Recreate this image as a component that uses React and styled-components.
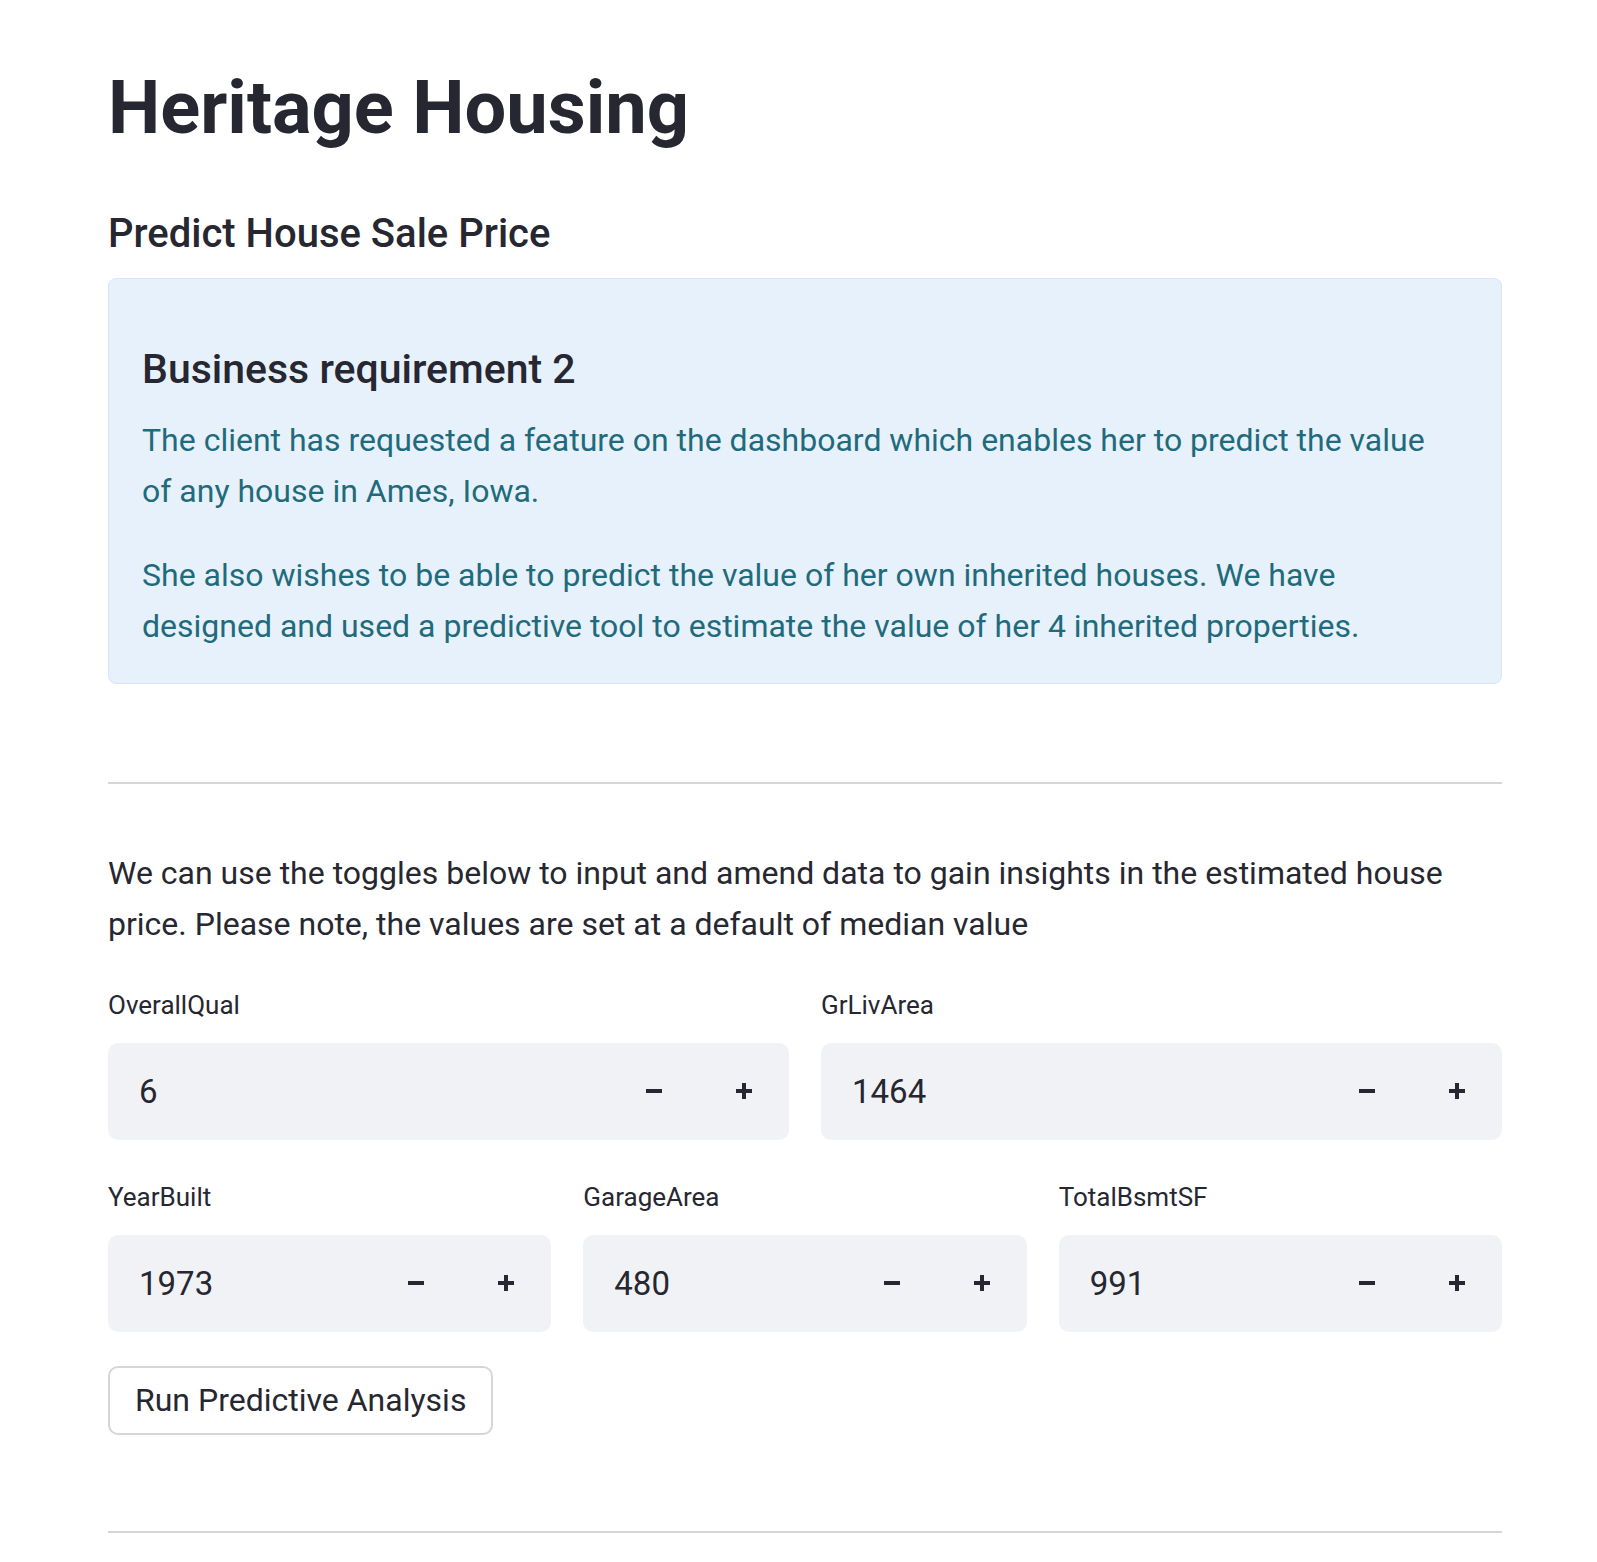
import React from 'react'
import styled, { createGlobalStyle } from 'styled-components'

const COLORS = {
  TEXT: '#262730',
  INFO_TEXT: '#1f6b7b',
  INFO_BG: '#e7f1fb',
  INFO_BORDER: '#d4e6f8',
  INPUT_BG: '#f0f2f6',
  RULE: '#d6d6d9',
}

const GlobalStyle = createGlobalStyle`
  body {
    margin: 0;
    background: #ffffff;
    color: ${COLORS.TEXT};
    font-family: Roboto, "Noto Sans", "Liberation Sans", sans-serif;
  }
`

const Main = styled.main`
  padding: 64px 95px 40px 108px;
`
const Title = styled.h1`
  font-size: 74px;
  font-weight: 700;
  line-height: 1.2;
  margin: 0 0 57px;
`
const Subtitle = styled.h3`
  font-size: 40px;
  font-weight: 500;
  line-height: 1.2;
  margin: 0 0 20px;
`
const InfoBox = styled.div`
  background: ${COLORS.INFO_BG};
  border: 1px solid ${COLORS.INFO_BORDER};
  border-radius: 8px;
  padding: 66px 48px 31px 33px;
`
const InfoHeading = styled.h4`
  font-size: 41px;
  font-weight: 500;
  line-height: 1.2;
  margin: 0 0 21px;
`
const InfoText = styled.p`
  color: ${COLORS.INFO_TEXT};
  font-size: 32px;
  line-height: 51px;
  margin: 0 0 ${p => (p.last ? 0 : '33px')};
`
const Rule = styled.hr`
  border: none;
  border-top: 2px solid ${COLORS.RULE};
  margin: ${p => p.top}px 0 0;
`
const Lead = styled.p`
  font-size: 32px;
  line-height: 51px;
  margin: 64px 0 40px;
`
const InputGrid = styled.div`
  display: grid;
  grid-template-columns: repeat(${p => p.cols}, 1fr);
  gap: 32px;
  margin-bottom: ${p => p.gap}px;
`
const Field = styled.div`
  display: flex;
  flex-direction: column;
`
const Label = styled.label`
  font-size: 26px;
  line-height: 30px;
  margin-bottom: 23px;
`
const NumberBox = styled.div`
  display: flex;
  align-items: center;
  height: 97px;
  background: ${COLORS.INPUT_BG};
  border-radius: 10px;
`
const Value = styled.span`
  flex: 1;
  padding-left: 31px;
  font-size: 33px;
`
const StepButton = styled.button`
  width: 90px;
  height: 100%;
  display: flex;
  align-items: center;
  justify-content: center;
  border: none;
  background: transparent;
  padding: 0;
  color: ${COLORS.TEXT};
`
const RunButton = styled.button`
  align-self: flex-start;
  height: 69px;
  padding: 0 25px;
  background: #ffffff;
  border: 2px solid ${COLORS.RULE};
  border-radius: 10px;
  font-family: inherit;
  font-size: 32px;
  color: ${COLORS.TEXT};
`

const Minus = () => (
  <svg width="16" height="16" viewBox="0 0 16 16">
    <rect x="0" y="6" width="16" height="4" fill="currentColor" />
  </svg>
)

const Plus = () => (
  <svg width="16" height="16" viewBox="0 0 16 16">
    <rect x="0" y="6" width="16" height="4" fill="currentColor" />
    <rect x="6" y="0" width="4" height="16" fill="currentColor" />
  </svg>
)

const NumberInput = ({ label, value }) => (
  <Field>
    <Label>{label}</Label>
    <NumberBox>
      <Value>{value}</Value>
      <StepButton aria-label="decrement"><Minus /></StepButton>
      <StepButton aria-label="increment"><Plus /></StepButton>
    </NumberBox>
  </Field>
)

const App = () => (
  <>
    <GlobalStyle />
    <Main>
      <Title>Heritage Housing</Title>
      <Subtitle>Predict House Sale Price</Subtitle>
      <InfoBox>
        <InfoHeading>Business requirement 2</InfoHeading>
        <InfoText>
          The client has requested a feature on the dashboard which enables her to predict the value
          of any house in Ames, Iowa.
        </InfoText>
        <InfoText last>
          She also wishes to be able to predict the value of her own inherited houses. We have
          designed and used a predictive tool to estimate the value of her 4 inherited properties.
        </InfoText>
      </InfoBox>
      <Rule top={98} />
      <Lead>
        We can use the toggles below to input and amend data to gain insights in the estimated house
        price. Please note, the values are set at a default of median value
      </Lead>
      <InputGrid cols={2} gap={42}>
        <NumberInput label="OverallQual" value="6" />
        <NumberInput label="GrLivArea" value="1464" />
      </InputGrid>
      <InputGrid cols={3} gap={34}>
        <NumberInput label="YearBuilt" value="1973" />
        <NumberInput label="GarageArea" value="480" />
        <NumberInput label="TotalBsmtSF" value="991" />
      </InputGrid>
      <RunButton>Run Predictive Analysis</RunButton>
      <Rule top={96} />
    </Main>
  </>
)

export default App
